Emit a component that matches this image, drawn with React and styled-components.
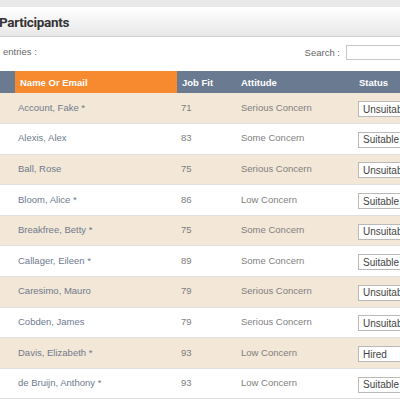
import React from "react"
import styled, { createGlobalStyle } from "styled-components"

const GlobalStyle = createGlobalStyle`
    html, body {
        margin: 0;
        padding: 0;
        background: #fff;
        overflow: hidden;
        font-family: "Liberation Sans", Arial, sans-serif;
    }
`

const Page = styled.div`
    width: 400px;
    height: 400px;
    overflow: hidden;
    display: flex;
    flex-direction: column;
`

const TopStrip = styled.div`
    height: 7px;
    background: #e9e9e9;
`

const PanelHeader = styled.div`
    height: 29px;
    display: flex;
    align-items: center;
    background: linear-gradient(to bottom, #ffffff, #e8e8e8);
    border-bottom: 1px solid #cfcfcf;
`

const Title = styled.h2`
    margin: 0 0 0 -1px;
    font-family: "Roboto", Arial, sans-serif;
    font-size: 13.5px;
    font-weight: bold;
    letter-spacing: -0.3px;
    color: #333;
`

const Toolbar = styled.div`
    height: 34px;
    display: flex;
    justify-content: space-between;
    align-items: flex-start;
    padding-top: 8px;
    box-sizing: border-box;
    font-size: 9.5px;
    color: #666;
`

const Entries = styled.span`
    padding-left: 3px;
    line-height: 14px;
`

const Search = styled.label`
    display: flex;
    align-items: center;
    gap: 6px;
    margin-right: -20px;
    line-height: 12px;
`

const SearchInput = styled.input`
    width: 72px;
    height: 13px;
    border: 1px solid #c8c8c8;
    padding: 0;
    margin: 0;
`

const Table = styled.table`
    width: 440px;
    border-collapse: collapse;
    table-layout: fixed;
    font-size: 9.5px;
`

const Th = styled.th`
    height: 22px;
    padding: 0 0 0 ${p => p.$pad || 5}px;
    text-align: left;
    font-weight: bold;
    color: #fff;
    background: ${p => (p.$active ? "#f7892e" : "#6a7a91")};
`

const Row = styled.tr`
    height: 30.6px;
    background: ${p => (p.$odd ? "#f3e7d7" : "#ffffff")};
    border-bottom: 1px solid #dedede;
`

const Td = styled.td`
    padding: 0 0 2px ${p => p.$pad || 5}px;
    color: ${p => p.$color || "#7a7a7a"};
    white-space: nowrap;
    overflow: hidden;
`

const StatusSelect = styled.select`
    appearance: none;
    width: 60px;
    height: 16px;
    margin-top: 4px;
    padding: 0 0 0 4px;
    border: 1px solid #b9b9b9;
    background: #fff;
    color: #444;
    font-family: "Liberation Sans", Arial, sans-serif;
    font-size: 10px;
`

const participants = [
    ["Account, Fake *", 71, "Serious Concern", "Unsuitable"],
    ["Alexis, Alex", 83, "Some Concern", "Suitable"],
    ["Ball, Rose", 75, "Serious Concern", "Unsuitable"],
    ["Bloom, Alice *", 86, "Low Concern", "Suitable"],
    ["Breakfree, Betty *", 75, "Some Concern", "Unsuitable"],
    ["Callager, Eileen *", 89, "Some Concern", "Suitable"],
    ["Caresimo, Mauro", 79, "Serious Concern", "Unsuitable"],
    ["Cobden, James", 79, "Serious Concern", "Unsuitable"],
    ["Davis, Elizabeth *", 93, "Low Concern", "Hired"],
    ["de Bruijn, Anthony *", 93, "Low Concern", "Suitable"],
]

const App = () => {
    return (
        <Page>
            <GlobalStyle />
            <TopStrip />
            <PanelHeader>
                <Title>Participants</Title>
            </PanelHeader>
            <Toolbar>
                <Entries>entries :</Entries>
                <Search>
                    Search :
                    <SearchInput type="text" />
                </Search>
            </Toolbar>
            <Table>
                <colgroup>
                    <col style={{ width: 15 }} />
                    <col style={{ width: 162 }} />
                    <col style={{ width: 58 }} />
                    <col style={{ width: 118 }} />
                    <col style={{ width: 87 }} />
                </colgroup>
                <thead>
                    <tr>
                        <Th />
                        <Th $active $pad={5}>Name Or Email</Th>
                        <Th>Job Fit</Th>
                        <Th $pad={6}>Attitude</Th>
                        <Th $pad={6}>Status</Th>
                    </tr>
                </thead>
                <tbody>
                    {participants.map(([name, fit, attitude, status], i) => (
                        <Row key={name} $odd={i % 2 === 0}>
                            <Td />
                            <Td $pad={3} $color="#6f7a8d">{name}</Td>
                            <Td $pad={4} $color="#7d7d7d">{fit}</Td>
                            <Td $pad={6} $color="#7f7f7f">{attitude}</Td>
                            <Td $pad={5}>
                                <StatusSelect defaultValue={status}>
                                    <option>Unsuitable</option>
                                    <option>Suitable</option>
                                    <option>Hired</option>
                                </StatusSelect>
                            </Td>
                        </Row>
                    ))}
                </tbody>
            </Table>
        </Page>
    )
}

export default App
